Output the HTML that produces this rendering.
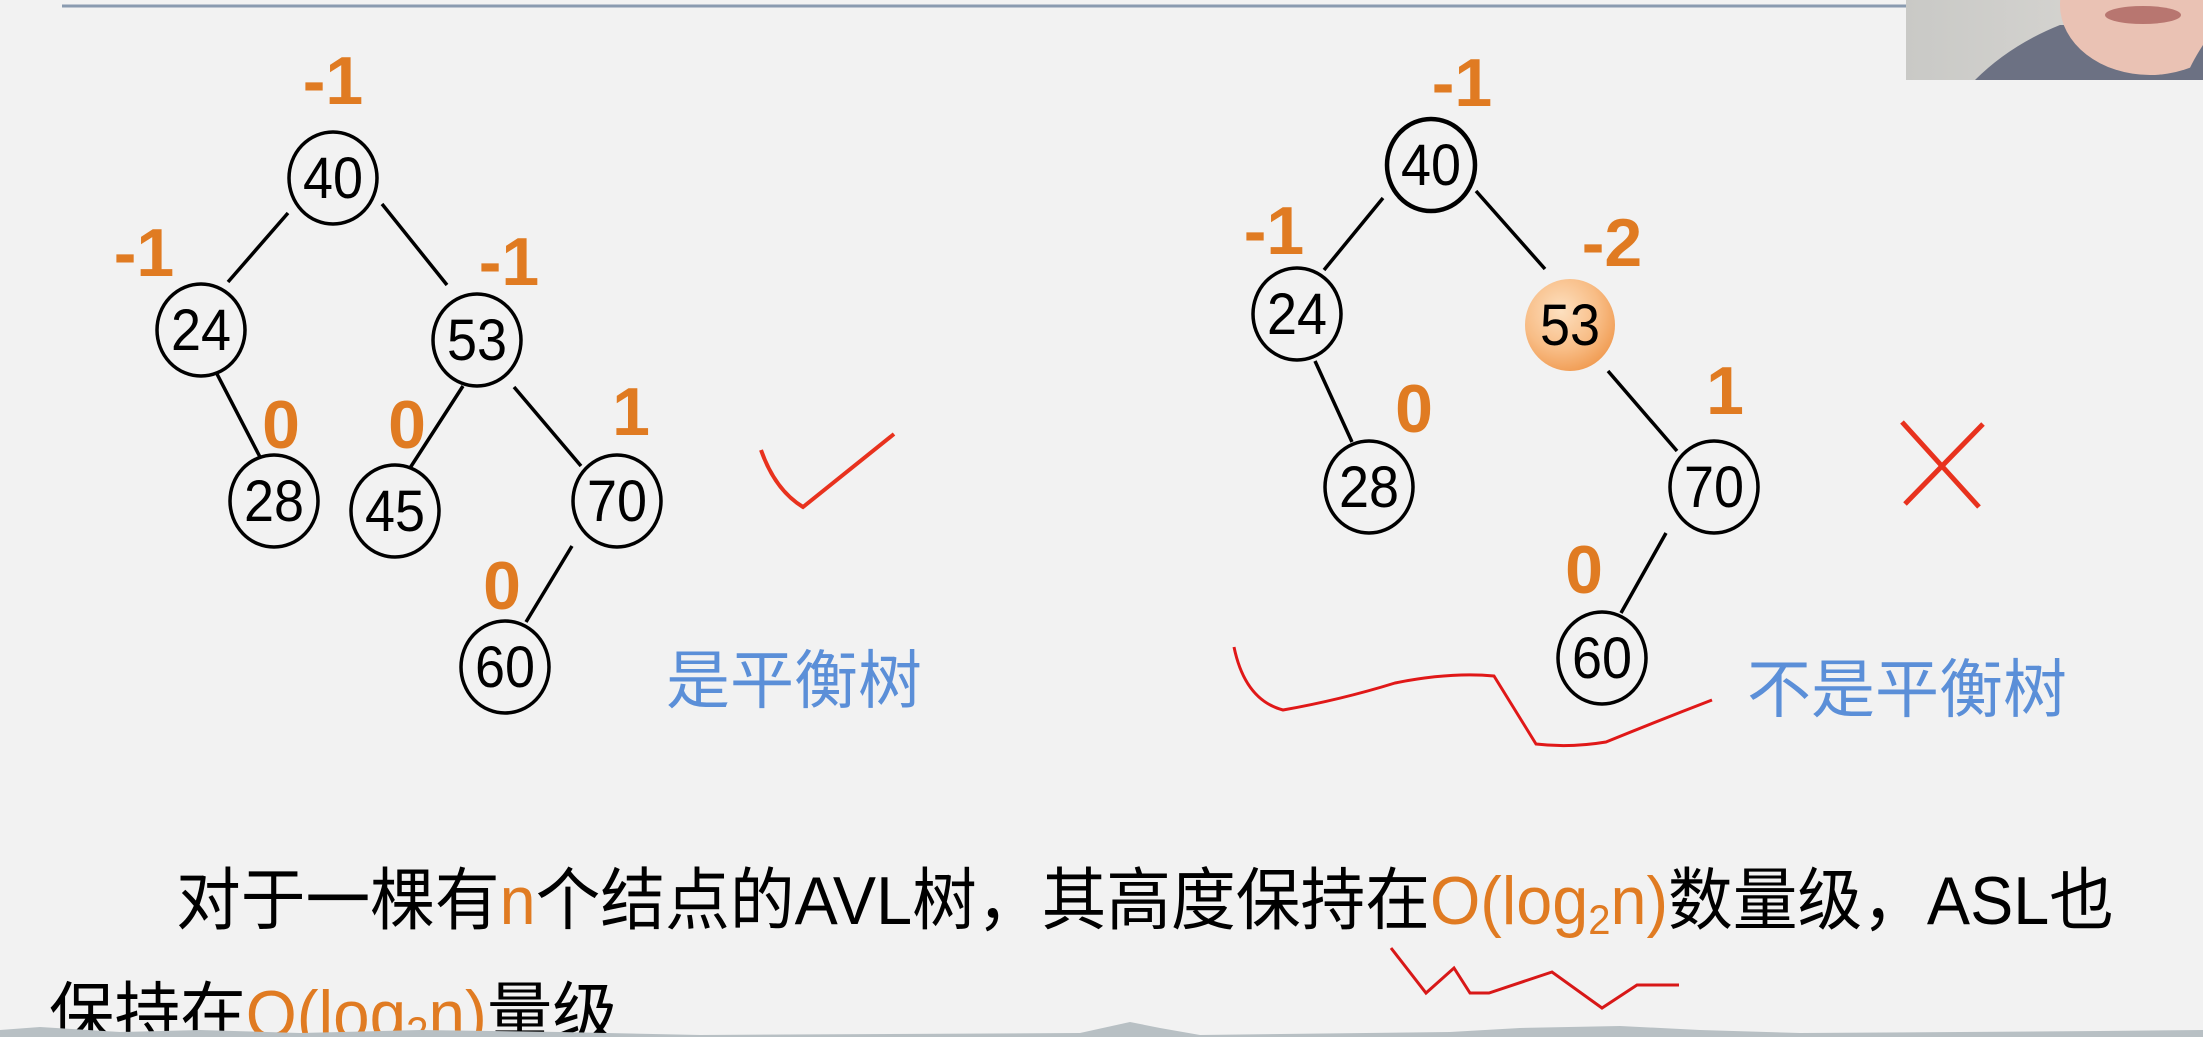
<!DOCTYPE html>
<html><head><meta charset="utf-8"><style>
html,body{margin:0;padding:0;background:#f2f2f2;}
svg{display:block;}
.n{font-family:"Liberation Sans","DejaVu Sans",sans-serif;font-size:58px;fill:#000;text-anchor:middle;}
.l{font-family:"Liberation Sans",sans-serif;font-weight:bold;font-size:68px;fill:#e07b22;text-anchor:middle;}
.b{font-family:"Liberation Sans","Noto Sans CJK SC",sans-serif;font-size:64px;fill:#5b8fd8;}
.t{font-family:"Liberation Sans","Noto Sans CJK SC",sans-serif;font-size:68px;fill:#000;}
.o{fill:#e07b22;}
</style></head><body>
<svg width="2203" height="1037" viewBox="0 0 2203 1037" xmlns="http://www.w3.org/2000/svg">
<defs>
<radialGradient id="og" cx="40%" cy="35%" r="70%"><stop offset="0" stop-color="#fde0c0"/><stop offset="0.6" stop-color="#f8bd86"/><stop offset="1" stop-color="#f09a50"/></radialGradient>
<linearGradient id="cam" x1="0" y1="0" x2="1" y2="0"><stop offset="0" stop-color="#c9c9c6"/><stop offset="1" stop-color="#dcdad6"/></linearGradient>
</defs>
<rect width="2203" height="1037" fill="#f2f2f2"/>
<line x1="62" y1="6" x2="1906" y2="6" stroke="#8a9bb0" stroke-width="3"/>
<rect x="1906" y="0" width="297" height="80" fill="url(#cam)"/>
<path d="M1975 80 Q2010 45 2060 25 L2203 25 L2203 80 Z" fill="#6c7183"/>
<ellipse cx="2150" cy="5" rx="90" ry="70" fill="#eac2b4"/>
<path d="M2203 45 Q2190 65 2185 80 L2203 80Z" fill="#6c7183"/>
<ellipse cx="2143" cy="15" rx="38" ry="9" fill="#b87670"/>
<g stroke="#000" stroke-width="3.5">
<line x1="288" y1="213" x2="228" y2="282"/><line x1="382" y1="204" x2="447" y2="285"/>
<line x1="217" y1="374" x2="260" y2="457"/><line x1="463" y1="386" x2="410" y2="468"/>
<line x1="514" y1="387" x2="581" y2="466"/><line x1="572" y1="546" x2="526" y2="622"/>
<line x1="1383" y1="198" x2="1324" y2="270"/><line x1="1476" y1="191" x2="1545" y2="269"/>
<line x1="1315" y1="361" x2="1352" y2="442"/><line x1="1608" y1="371" x2="1677" y2="451"/>
<line x1="1666" y1="533" x2="1621" y2="613"/>
</g>
<g fill="#f2f2f2" stroke="#000" stroke-width="3.5">
<ellipse cx="333" cy="178" rx="44" ry="46"/><ellipse cx="201" cy="330" rx="44" ry="46"/>
<ellipse cx="477" cy="340" rx="44" ry="46"/><ellipse cx="274" cy="501" rx="44" ry="46"/>
<ellipse cx="395" cy="511" rx="44" ry="46"/><ellipse cx="617" cy="501" rx="44" ry="46"/>
<ellipse cx="505" cy="667" rx="44" ry="46"/>
<ellipse cx="1431" cy="165" rx="44" ry="46" stroke-width="4.5"/><ellipse cx="1297" cy="314" rx="44" ry="46"/>
<ellipse cx="1369" cy="487" rx="44" ry="46"/><ellipse cx="1714" cy="487" rx="44" ry="46"/>
<ellipse cx="1602" cy="658" rx="44" ry="46"/>
</g>
<ellipse cx="1570" cy="325" rx="45" ry="46" fill="url(#og)"/>
<g class="n">
<text x="333" y="198" textLength="60" lengthAdjust="spacingAndGlyphs">40</text><text x="201" y="350" textLength="60" lengthAdjust="spacingAndGlyphs">24</text>
<text x="477" y="360" textLength="60" lengthAdjust="spacingAndGlyphs">53</text><text x="274" y="521" textLength="60" lengthAdjust="spacingAndGlyphs">28</text>
<text x="395" y="531" textLength="60" lengthAdjust="spacingAndGlyphs">45</text><text x="617" y="521" textLength="60" lengthAdjust="spacingAndGlyphs">70</text>
<text x="505" y="687" textLength="60" lengthAdjust="spacingAndGlyphs">60</text>
<text x="1431" y="185" textLength="60" lengthAdjust="spacingAndGlyphs">40</text><text x="1297" y="334" textLength="60" lengthAdjust="spacingAndGlyphs">24</text>
<text x="1570" y="345" textLength="60" lengthAdjust="spacingAndGlyphs">53</text><text x="1369" y="507" textLength="60" lengthAdjust="spacingAndGlyphs">28</text>
<text x="1714" y="507" textLength="60" lengthAdjust="spacingAndGlyphs">70</text><text x="1602" y="678" textLength="60" lengthAdjust="spacingAndGlyphs">60</text>
</g>
<g class="l">
<text x="333" y="104">-1</text><text x="144" y="276">-1</text><text x="509" y="285">-1</text>
<text x="281" y="448">0</text><text x="407" y="448">0</text><text x="631" y="435">1</text>
<text x="502" y="609">0</text>
<text x="1462" y="106">-1</text><text x="1274" y="254">-1</text><text x="1612" y="266">-2</text>
<text x="1414" y="432">0</text><text x="1725" y="414">1</text><text x="1584" y="593">0</text>
</g>
<path d="M761 450 Q775 490 803 507 L894 434" fill="none" stroke="#e8321e" stroke-width="4"/>
<g stroke="#e8321e" stroke-width="5"><line x1="1902" y1="422" x2="1979" y2="507"/><line x1="1983" y1="424" x2="1905" y2="504"/></g>
<text class="b" x="666" y="703" textLength="256">是平衡树</text>
<text class="b" x="1747" y="712" textLength="320">不是平衡树</text>
<path d="M1234 647 Q1245 700 1283 710 Q1340 700 1395 683 Q1450 672 1494 676 L1536 744 Q1570 748 1606 742 Q1660 720 1712 700" fill="none" stroke="#e01818" stroke-width="3"/>
<path d="M1391 948 L1426 993 L1454 968 L1470 993 L1489 993 L1552 972 L1602 1008 L1637 985 L1679 985" fill="none" stroke="#d81818" stroke-width="3"/>
<text class="t" x="176" y="924" textLength="1938" lengthAdjust="spacingAndGlyphs">对于一棵有<tspan class="o">n</tspan>个结点的AVL树，其高度保持在<tspan class="o">O(log<tspan font-size="42" dy="10">2</tspan><tspan dy="-10">n)</tspan></tspan>数量级，ASL也</text>
<text class="t" x="49" y="1038" textLength="569" lengthAdjust="spacingAndGlyphs">保持在<tspan class="o">O(log<tspan font-size="42" dy="8">2</tspan><tspan dy="-8">n)</tspan></tspan>量级</text>
<path d="M0 1037 L0 1030 L40 1027 L120 1032 L200 1030 L300 1033 L420 1030 L560 1032 L700 1035 L1080 1033 L1130 1022 L1160 1028 L1200 1035 L1450 1032 L1520 1028 L1620 1026 L1700 1030 L1800 1033 L1960 1032 L2100 1031 L2203 1030 L2203 1037Z" fill="#b8c0c4"/>
</svg>
</body></html>
